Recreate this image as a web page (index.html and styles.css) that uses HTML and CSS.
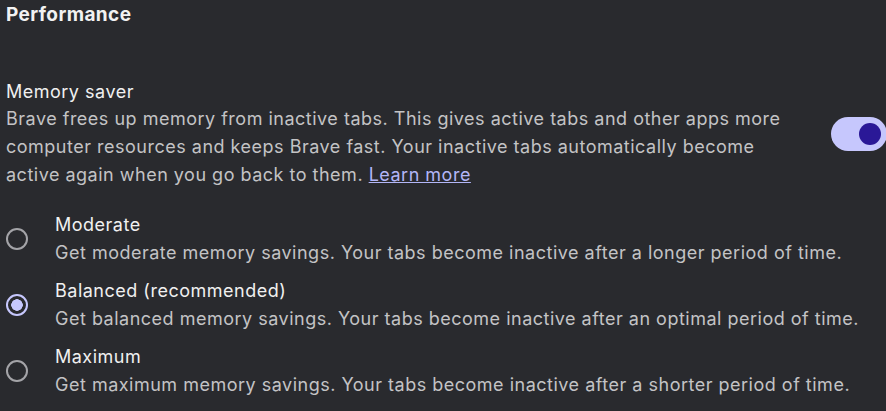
FILE: index.html
```html
<!DOCTYPE html>
<html>
<head>
<meta charset="utf-8">
<link rel="stylesheet" href="styles.css">
</head>
<body>
<div class="page">
  <h2 class="section-title">Performance</h2>
  <div class="setting">
    <div class="setting-text">
      <div class="setting-label">Memory saver</div>
      <div class="setting-desc">Brave frees up memory from inactive tabs. This gives active tabs and other apps more computer resources and keeps Brave fast. Your inactive tabs automatically become active again when you go back to them. <a class="link" href="#">Learn more</a></div>
    </div>
    <div class="toggle"><div class="knob"></div></div>
  </div>
  <div class="options">
    <div class="option">
      <div class="radio"></div>
      <div class="option-text">
        <div class="option-label">Moderate</div>
        <div class="option-desc">Get moderate memory savings. Your tabs become inactive after a longer period of time.</div>
      </div>
    </div>
    <div class="option">
      <div class="radio checked"></div>
      <div class="option-text">
        <div class="option-label">Balanced (recommended)</div>
        <div class="option-desc">Get balanced memory savings. Your tabs become inactive after an optimal period of time.</div>
      </div>
    </div>
    <div class="option">
      <div class="radio"></div>
      <div class="option-text">
        <div class="option-label">Maximum</div>
        <div class="option-desc">Get maximum memory savings. Your tabs become inactive after a shorter period of time.</div>
      </div>
    </div>
  </div>
</div>
</body>
</html>
```

FILE: styles.css
```css
html, body {
  margin: 0;
  padding: 0;
  background: #292a2e;
}
body {
  font-family: Inter, "Noto Sans", sans-serif;
  color: #ececec;
  font-size: 18px;
  letter-spacing: 0.5px;
}
.page {
  padding-left: 6px;
  width: 880px;
  overflow: hidden;
}
.section-title {
  margin: 0;
  font-size: 19px;
  font-weight: 700;
  line-height: 30px;
  letter-spacing: 0.4px;
  color: #f2f2f2;
}
.setting {
  margin-top: 49px;
  display: flex;
  align-items: center;
  justify-content: space-between;
}
.setting-text {
  width: 800px;
}
.setting-label {
  line-height: 26px;
  color: #f0f0f0;
}
.setting-desc {
  line-height: 28px;
  color: #c3c3c5;
}
.link {
  color: #b3b6f7;
  text-decoration: underline;
}
.toggle {
  width: 56px;
  height: 34px;
  border-radius: 17px;
  background: #c6c7fd;
  display: flex;
  align-items: center;
  justify-content: flex-end;
  padding-right: 6px;
  box-sizing: border-box;
  margin-right: -1px;
  flex-shrink: 0;
}
.knob {
  width: 22px;
  height: 22px;
  border-radius: 50%;
  background: #2a1897;
}
.options {
  margin-top: 22px;
  display: flex;
  flex-direction: column;
  gap: 10px;
}
.option {
  display: flex;
  align-items: center;
  gap: 27px;
}
.radio {
  width: 22px;
  height: 22px;
  border-radius: 50%;
  border: 2px solid #a4a4a8;
  box-sizing: border-box;
  flex-shrink: 0;
}
.radio.checked {
  border-color: #c6c7fd;
  background: radial-gradient(circle, #c6c7fd 0 5.5px, transparent 6px);
}
.option-label {
  line-height: 28px;
  color: #f0f0f0;
}
.option-desc {
  line-height: 28px;
  color: #c3c3c5;
  white-space: nowrap;
}
```
